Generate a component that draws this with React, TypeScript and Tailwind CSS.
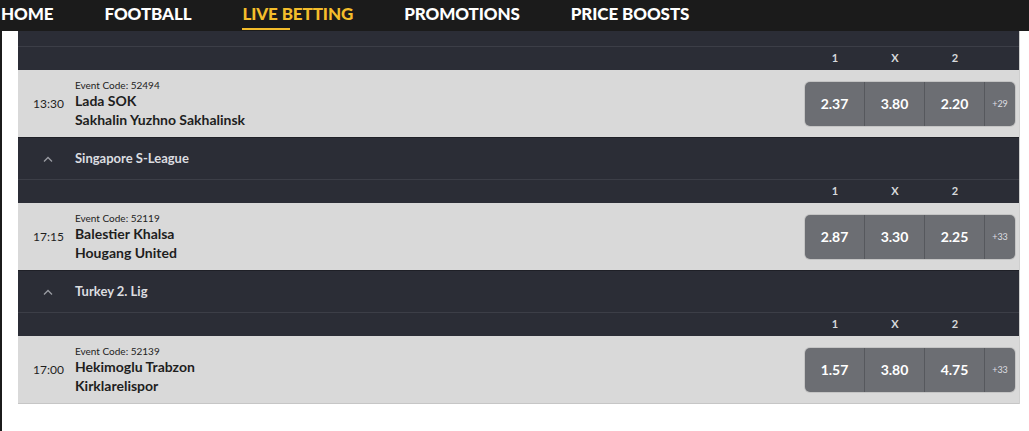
import React from 'react';

type Match = {
  code: string;
  time: string;
  home: string;
  away: string;
  odds: [string, string, string];
  more: string;
};

type League = {
  name: string;
  match: Match;
  partial?: boolean;
};

const leagues: League[] = [
  {
    name: '',
    partial: true,
    match: { code: '52494', time: '13:30', home: 'Lada SOK', away: 'Sakhalin Yuzhno Sakhalinsk', odds: ['2.37', '3.80', '2.20'], more: '+29' },
  },
  {
    name: 'Singapore S-League',
    match: { code: '52119', time: '17:15', home: 'Balestier Khalsa', away: 'Hougang United', odds: ['2.87', '3.30', '2.25'], more: '+33' },
  },
  {
    name: 'Turkey 2. Lig',
    match: { code: '52139', time: '17:00', home: 'Hekimoglu Trabzon', away: 'Kirklarelispor', odds: ['1.57', '3.80', '4.75'], more: '+33' },
  },
];

const navItems = ['HOME', 'FOOTBALL', 'LIVE BETTING', 'PROMOTIONS', 'PRICE BOOSTS'];

function Chevron() {
  return (
    <svg width="10" height="6" viewBox="0 0 10 6" className="shrink-0">
      <path d="M1 5.5 L5 1.5 L9 5.5" fill="none" stroke="#9a9ca3" strokeWidth="1.3" />
    </svg>
  );
}

function LeagueBlock({ league, last }: { league: League; last: boolean }) {
  const m = league.match;
  return (
    <div>
      {/* League header */}
      {league.partial ? (
        <div className="h-[15px] bg-[#2b2d36]" />
      ) : (
        <div className="h-[41px] bg-[#2b2d36] flex items-center">
          <div className="w-[57px] flex justify-end pr-[22px]">
            <Chevron />
          </div>
          <span className="text-[13px] font-bold text-[#dcdde0]">{league.name}</span>
        </div>
      )}
      <div className="h-px bg-[#3c3e47]" />

      {/* Column labels */}
      <div className="h-[23px] bg-[#2b2d36] flex items-center justify-end pr-[34px]">
        {['1', 'X', '2'].map((l) => (
          <span key={l} className="w-[60px] text-center text-[11px] font-bold text-[#d8d9dc]">
            {l}
          </span>
        ))}
      </div>

      {/* Match row */}
      <div
        className={`h-[68px] bg-[#d9d9d9] border-b flex items-center ${last ? 'border-[#c6c6c6]' : 'border-[#1f2027]'}`}
      >
        <span className="w-[57px] pl-[15px] text-[12px] text-[#1e1e1e]">{m.time}</span>
        <div className="flex-1 flex flex-col pt-[1px]">
          <span className="text-[10px] leading-[12px] text-[#222]">Event Code: {m.code}</span>
          <span className="text-[14px] leading-[19px] font-bold text-[#1e1e1e]">{m.home}</span>
          <span className="text-[14px] leading-[19px] font-bold text-[#1e1e1e]">{m.away}</span>
        </div>
        <div className="mr-[4px] h-[44px] flex rounded-[5px] overflow-hidden bg-[#6c6e73] shadow-[0_0_0_1px_#c4c4c4]">
          {m.odds.map((o) => (
            <div
              key={o}
              className="w-[60px] flex items-center justify-center border-r border-[#56585d] text-[14px] font-bold text-white"
            >
              {o}
            </div>
          ))}
          <div className="w-[30px] flex items-center justify-center text-[9px] text-[#dedfe2]">{m.more}</div>
        </div>
      </div>
    </div>
  );
}

export default function App() {
  return (
    <div className="h-[431px] w-[1029px] overflow-hidden bg-white font-['Lato',sans-serif]">
      {/* Top navigation */}
      <nav className="h-[31px] bg-[#1b1b1b] flex items-center gap-[51px] pl-[1px]">
        {navItems.map((item) => {
          const active = item === 'LIVE BETTING';
          return (
            <div key={item} className="relative h-full flex items-center pb-[3px]">
              <span className={`text-[17px] font-black tracking-[-0.1px] ${active ? 'text-[#f4bd2b]' : 'text-white'}`}>
                {item}
              </span>
              {active && <span className="absolute left-0 top-[28px] w-[48px] h-[2px] bg-[#f4bd2b]" />}
            </div>
          );
        })}
      </nav>

      {/* Body */}
      <div className="flex h-[400px]">
        <div className="w-[2px] bg-[#1b1b1b]" />
        <div className="w-[16px]" />
        <div className="w-[1001px] self-start">
          {leagues.map((lg, i) => (
            <LeagueBlock key={i} league={lg} last={i === leagues.length - 1} />
          ))}
        </div>
        <div className="w-px self-start h-[373px] bg-[#cfcfcf]" />
      </div>
    </div>
  );
}
